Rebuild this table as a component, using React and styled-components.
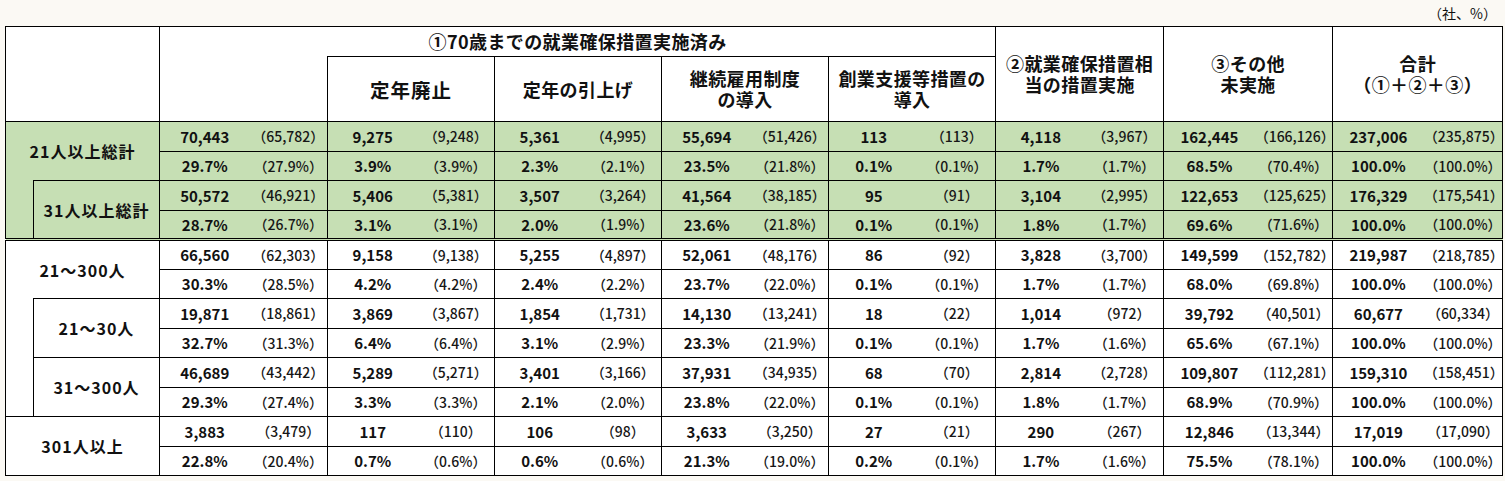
import React from "react";
import styled, { createGlobalStyle } from "styled-components";

// column widths: label outer, label inner, then 8 groups of (value, previous)
const GROUP_WIDTHS = [
  [90, 78],
  [90, 77],
  [90, 77],
  [90, 77],
  [90, 77],
  [90, 78],
  [91, 78],
  [91, 79],
];

const pair = (s) => s.split("|");

// each block: counts row, percent row
const blocks = {
  total21: {
    counts: "70,443|65,782 9,275|9,248 5,361|4,995 55,694|51,426 113|113 4,118|3,967 162,445|166,126 237,006|235,875",
    pcts: "29.7%|27.9% 3.9%|3.9% 2.3%|2.1% 23.5%|21.8% 0.1%|0.1% 1.7%|1.7% 68.5%|70.4% 100.0%|100.0%",
  },
  total31: {
    counts: "50,572|46,921 5,406|5,381 3,507|3,264 41,564|38,185 95|91 3,104|2,995 122,653|125,625 176,329|175,541",
    pcts: "28.7%|26.7% 3.1%|3.1% 2.0%|1.9% 23.6%|21.8% 0.1%|0.1% 1.8%|1.7% 69.6%|71.6% 100.0%|100.0%",
  },
  r21_300: {
    counts: "66,560|62,303 9,158|9,138 5,255|4,897 52,061|48,176 86|92 3,828|3,700 149,599|152,782 219,987|218,785",
    pcts: "30.3%|28.5% 4.2%|4.2% 2.4%|2.2% 23.7%|22.0% 0.1%|0.1% 1.7%|1.7% 68.0%|69.8% 100.0%|100.0%",
  },
  r21_30: {
    counts: "19,871|18,861 3,869|3,867 1,854|1,731 14,130|13,241 18|22 1,014|972 39,792|40,501 60,677|60,334",
    pcts: "32.7%|31.3% 6.4%|6.4% 3.1%|2.9% 23.3%|21.9% 0.1%|0.1% 1.7%|1.6% 65.6%|67.1% 100.0%|100.0%",
  },
  r31_300: {
    counts: "46,689|43,442 5,289|5,271 3,401|3,166 37,931|34,935 68|70 2,814|2,728 109,807|112,281 159,310|158,451",
    pcts: "29.3%|27.4% 3.3%|3.3% 2.1%|2.0% 23.8%|22.0% 0.1%|0.1% 1.8%|1.7% 68.9%|70.9% 100.0%|100.0%",
  },
  r301: {
    counts: "3,883|3,479 117|110 106|98 3,633|3,250 27|21 290|267 12,846|13,344 17,019|17,090",
    pcts: "22.8%|20.4% 0.7%|0.6% 0.6%|0.6% 21.3%|19.0% 0.2%|0.1% 1.7%|1.6% 75.5%|78.1% 100.0%|100.0%",
  },
};

const GlobalStyle = createGlobalStyle`
  html, body {
    margin: 0;
    background: #fbf9f4;
  }
  body {
    font-family: "Noto Sans CJK JP", "Noto Sans", sans-serif;
    color: #000;
  }
`;

const Page = styled.div`
  padding: 0 3px 0 5px;
  width: 1497px;
`;

const Unit = styled.div`
  height: 26px;
  line-height: 26px;
  text-align: right;
  padding-right: 5px;
  font-size: 14px;
  color: #111;
`;

const Table = styled.table`
  border-collapse: collapse;
  table-layout: fixed;
  width: 1497px;
  background: #fff;
`;

const Col = styled.col`
  width: ${(p) => p.$w}px;
`;

const HeadRow = styled.tr`
  height: ${(p) => p.$h}px;
`;

const HeadCell = styled.th`
  border: 1px solid #000;
  padding: 0;
  font-weight: 700;
  font-size: ${(p) => p.$size || 18}px;
  letter-spacing: ${(p) => p.$spacing ?? 0.4}px;
  line-height: 21px;
  text-align: center;
  vertical-align: middle;
  color: #111;
  ${(p) => p.$openBottom && "border-bottom: none;"}
  ${(p) => p.$openTop && "border-top: none;"}
`;

const Line = styled.span`
  display: block;
  height: 21px;
`;

const Row = styled.tr`
  height: 29.5px;
  background: ${(p) => (p.$green ? "#c6dfb4" : "#fff")};
`;

const edges = (p) => `
  ${p.$double ? "border-bottom: 3px double #000;" : ""}
  ${p.$openTop ? "border-top: none;" : ""}
  ${p.$openBottom ? "border-bottom: none;" : ""}
`;

const Label = styled.td`
  border: 1px solid #000;
  padding: 0;
  font-weight: 700;
  font-size: 16px;
  letter-spacing: 1px;
  text-align: center;
  vertical-align: middle;
  color: #111;
  ${edges}
`;

const Value = styled.td`
  border: 1px solid #000;
  border-right: none;
  padding: 0;
  font-weight: 700;
  font-size: 15px;
  text-align: center;
  vertical-align: middle;
  color: #111;
  ${edges}
`;

const Prev = styled.td`
  border: 1px solid #000;
  border-left: none;
  padding: 0;
  font-weight: 500;
  font-size: 14px;
  text-align: center;
  vertical-align: middle;
  color: #161616;
  ${edges}
`;

const Cells = ({ data, double }) =>
  data.split(" ").map(pair).map(([v, p], i) => (
    <React.Fragment key={i}>
      <Value $double={double}>{v}</Value>
      <Prev $double={double}>（{p}）</Prev>
    </React.Fragment>
  ));

const Lines = ({ lines }) => lines.map((l) => <Line key={l}>{l}</Line>);

const App = () => {
  const b = blocks;
  return (
    <Page>
      <GlobalStyle />
      <Unit>（社、%）</Unit>
      <Table>
        <colgroup>
          <Col $w={28} />
          <Col $w={126} />
          {GROUP_WIDTHS.flat().map((w, i) => (
            <Col key={i} $w={w} />
          ))}
        </colgroup>
        <thead>
          <HeadRow $h={30}>
            <HeadCell colSpan={2} rowSpan={2} />
            <HeadCell colSpan={10} $openBottom>
              ①70歳までの就業確保措置実施済み
            </HeadCell>
            <HeadCell colSpan={2} rowSpan={2}>
              <Lines lines={["②就業確保措置相", "当の措置実施"]} />
            </HeadCell>
            <HeadCell colSpan={2} rowSpan={2}>
              <Lines lines={["③その他", "未実施"]} />
            </HeadCell>
            <HeadCell colSpan={2} rowSpan={2}>
              <Lines lines={["合計", "（①＋②＋③）"]} />
            </HeadCell>
          </HeadRow>
          <HeadRow $h={65}>
            <HeadCell colSpan={2} $openTop />
            <HeadCell colSpan={2} $size={19.5} $spacing={1}>
              定年廃止
            </HeadCell>
            <HeadCell colSpan={2}>定年の引上げ</HeadCell>
            <HeadCell colSpan={2}>
              <Lines lines={["継続雇用制度", "の導入"]} />
            </HeadCell>
            <HeadCell colSpan={2}>
              <Lines lines={["創業支援等措置の", "導入"]} />
            </HeadCell>
          </HeadRow>
        </thead>
        <tbody>
          <Row $green>
            <Label colSpan={2} rowSpan={2} $openBottom>
              21人以上総計
            </Label>
            <Cells data={b.total21.counts} />
          </Row>
          <Row $green>
            <Cells data={b.total21.pcts} />
          </Row>
          <Row $green>
            <Label rowSpan={2} $openTop $double />
            <Label rowSpan={2} $double>
              31人以上総計
            </Label>
            <Cells data={b.total31.counts} />
          </Row>
          <Row $green>
            <Cells data={b.total31.pcts} double />
          </Row>

          <Row>
            <Label colSpan={2} rowSpan={2} $openBottom>
              21～300人
            </Label>
            <Cells data={b.r21_300.counts} />
          </Row>
          <Row>
            <Cells data={b.r21_300.pcts} />
          </Row>
          <Row>
            <Label rowSpan={4} $openTop />
            <Label rowSpan={2}>21～30人</Label>
            <Cells data={b.r21_30.counts} />
          </Row>
          <Row>
            <Cells data={b.r21_30.pcts} />
          </Row>
          <Row>
            <Label rowSpan={2}>31～300人</Label>
            <Cells data={b.r31_300.counts} />
          </Row>
          <Row>
            <Cells data={b.r31_300.pcts} />
          </Row>
          <Row>
            <Label colSpan={2} rowSpan={2}>
              301人以上
            </Label>
            <Cells data={b.r301.counts} />
          </Row>
          <Row>
            <Cells data={b.r301.pcts} />
          </Row>
        </tbody>
      </Table>
    </Page>
  );
};

export default App;
